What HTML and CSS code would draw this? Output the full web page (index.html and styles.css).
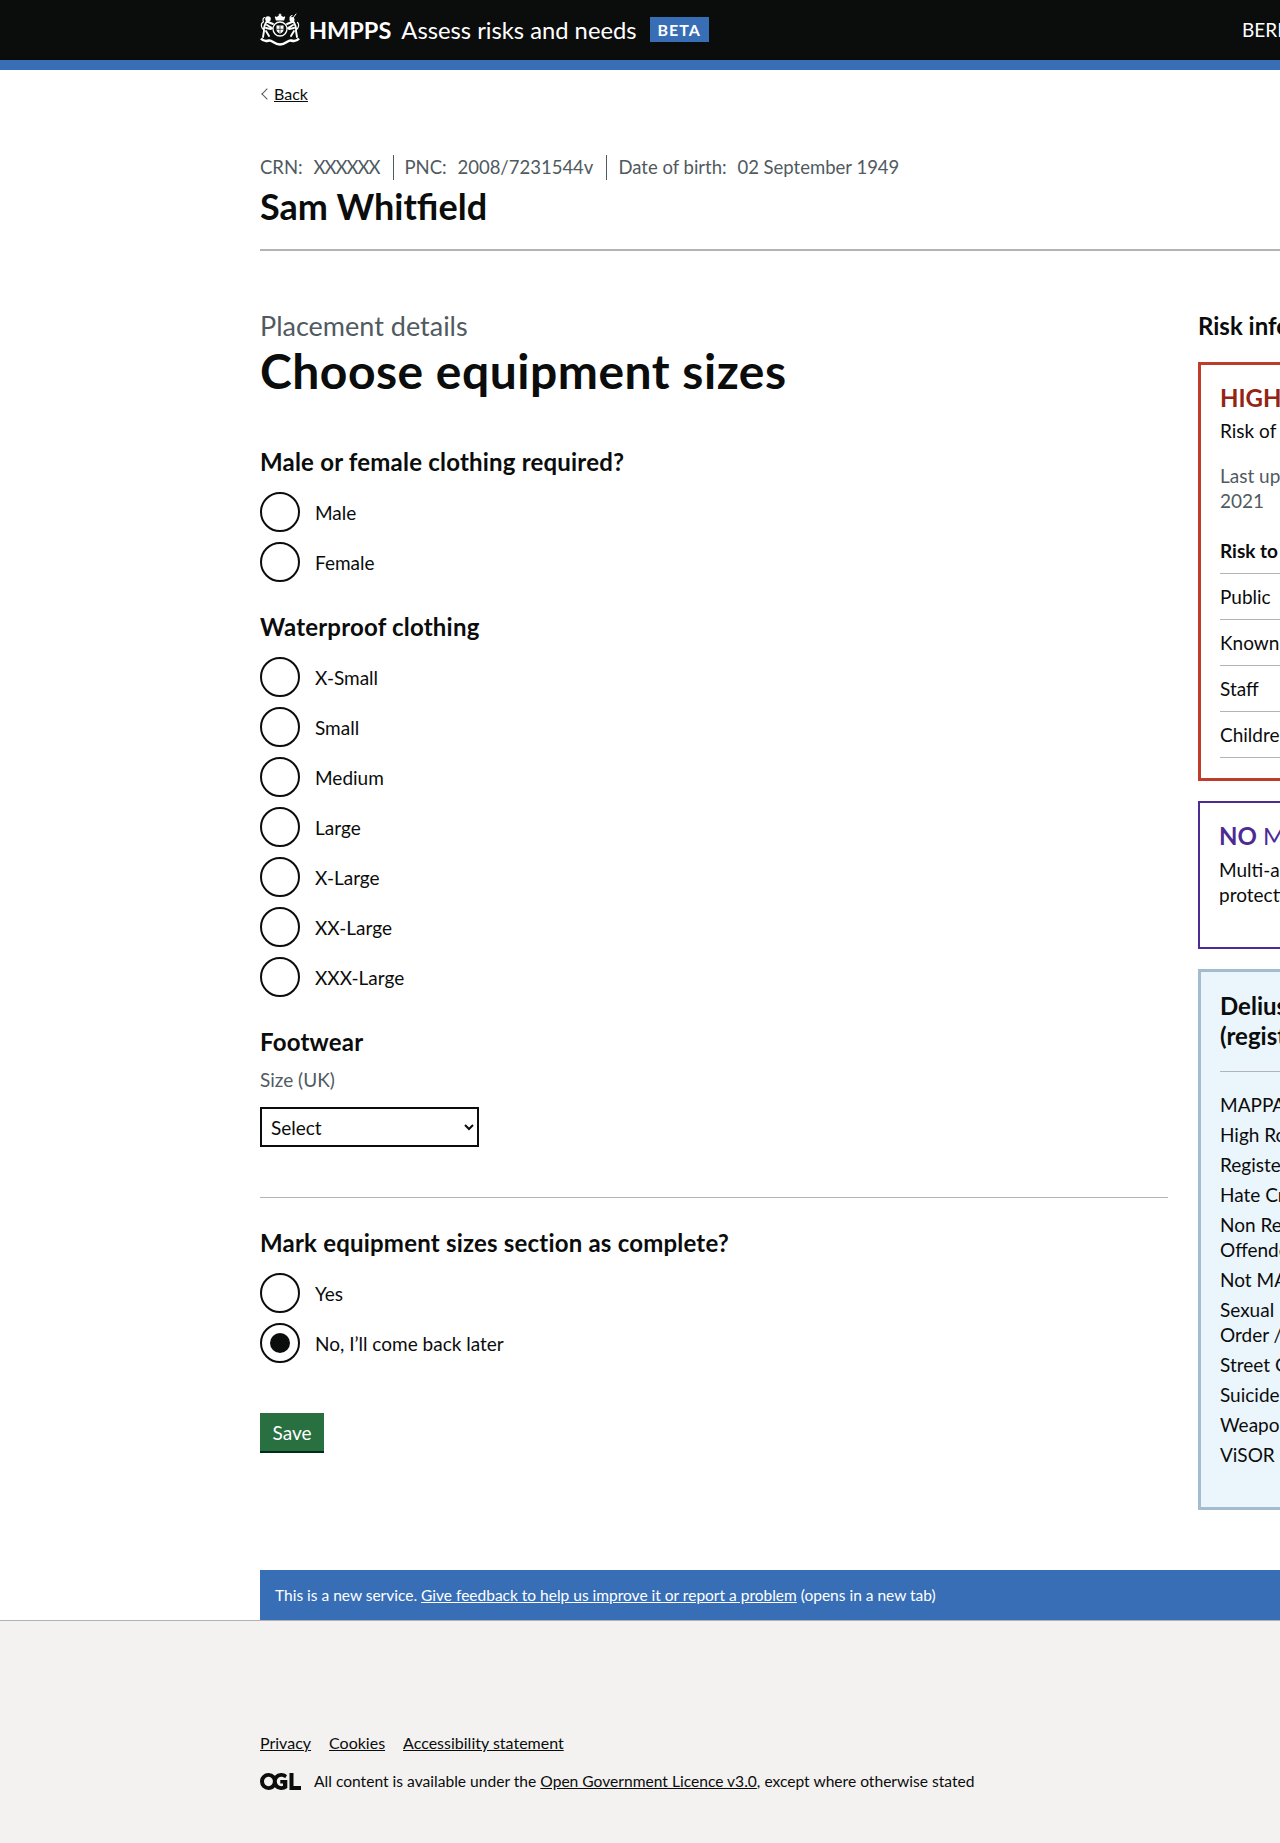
FILE: index.html
```html
<!DOCTYPE html>
<html lang="en">
<head>
    <meta charset="UTF-8">
    <meta name="viewport" content="width=device-width, initial-scale=1.0">
    <title>Choose equipment sizes - Assess risks and needs</title>
    <link rel="stylesheet" href="styles.css">
</head>
<body>
    <header class="site-header">
        <div class="header-inner">
            <a class="brand" href="#">
                <svg class="crest" viewBox="0 0 40 33" aria-hidden="true">
                    <!-- crown -->
                    <path fill="#fff" d="M20 0l.8 1.500 1 .2-.7 1 2.400 1.300.8-.7 1 .8-1.300 3.400h-8l-1.300-3.400 1-.8.8.7 2.400-1.300-.7-1 1-.2z"/>
                    <!-- shield -->
                    <circle cx="20" cy="16" r="7" fill="none" stroke="#fff" stroke-width="1.300"/>
                    <path fill="#fff" d="M16.500 12.500h7v4c0 2-1.500 3.500-3.500 4.200-2-.7-3.500-2.200-3.500-4.200z"/>
                    <path fill="none" stroke="#0b0c0c" stroke-width=".7" d="M20 12.500v8M16.500 16.300h7"/>
                    <!-- lion -->
                    <g fill="none" stroke="#fff" stroke-linecap="round" stroke-width="1.900">
                        <circle cx="8" cy="6" r="2.800" fill="#fff" stroke="none"/>
                        <path d="M7 8c-2 3-3.500 6-3 10l-1 6M6 18l3 5M8 9l5 2M7 12l5 3M6 15l5 1"/>
                        <path stroke-width="1.200" d="M3 16C1 14 .8 11 2.500 9.500M4.500 4.500C3 5 2.500 7 3.500 9"/>
                    </g>
                    <!-- unicorn -->
                    <g fill="none" stroke="#fff" stroke-linecap="round" stroke-width="1.900">
                        <path stroke-width="1" d="M33 5l3-4"/>
                        <circle cx="32" cy="6.500" r="2.500" fill="#fff" stroke="none"/>
                        <path d="M33 8c2 3 3.500 6 3 10l1 6M34 18l-3 5M32 9l-5 2M33 12l-5 3M34 15l-5 1"/>
                        <path stroke-width="1.200" d="M37 16c2-2 2.200-5 .5-6.500M30 5c0-1 .5-2 2-2.500"/>
                    </g>
                    <!-- motto ribbon -->
                    <path fill="none" stroke="#fff" stroke-width="2.400" d="M1 25.500c2 2.500 5 3 8 2 3.500-.5 5 4 11 4s7.500-4.500 11-4c3 1 6 .5 8-2"/>
                </svg>
                <span class="brand-org">HMPPS</span>
                <span class="brand-service">Assess risks and needs</span>
            </a>
            <strong class="phase-tag">BETA</strong>
            <span class="user-name">BERNARD SMITH</span>
        </div>
    </header>

    <div class="page-width">
        <a class="back-link" href="#">Back</a>

        <div class="subject">
            <ul class="subject-meta">
                <li><span class="meta-key">CRN:</span> <span class="crn-value">XXXXXX</span></li>
                <li><span class="meta-key">PNC:</span> 2008/7231544v</li>
                <li><span class="meta-key">Date of birth:</span> 02 September 1949</li>
            </ul>
            <p class="subject-name">Sam Whitfield</p>
        </div>

        <div class="columns">
            <main class="content">
                <span class="caption">Placement details</span>
                <h1>Choose equipment sizes</h1>

                <form>
                    <fieldset>
                        <legend>Male or female clothing required?</legend>
                        <div class="radios">
                            <label class="radio"><input type="radio" name="gender"><span class="radio-mark"></span>Male</label>
                            <label class="radio"><input type="radio" name="gender"><span class="radio-mark"></span>Female</label>
                        </div>
                    </fieldset>

                    <fieldset>
                        <legend>Waterproof clothing</legend>
                        <div class="radios">
                            <label class="radio"><input type="radio" name="waterproof"><span class="radio-mark"></span>X-Small</label>
                            <label class="radio"><input type="radio" name="waterproof"><span class="radio-mark"></span>Small</label>
                            <label class="radio"><input type="radio" name="waterproof"><span class="radio-mark"></span>Medium</label>
                            <label class="radio"><input type="radio" name="waterproof"><span class="radio-mark"></span>Large</label>
                            <label class="radio"><input type="radio" name="waterproof"><span class="radio-mark"></span>X-Large</label>
                            <label class="radio"><input type="radio" name="waterproof"><span class="radio-mark"></span>XX-Large</label>
                            <label class="radio"><input type="radio" name="waterproof"><span class="radio-mark"></span>XXX-Large</label>
                        </div>
                    </fieldset>

                    <div class="footwear">
                        <h2>Footwear</h2>
                        <label class="hint" for="footwear-size">Size (UK)</label>
                        <select id="footwear-size" class="select">
                            <option>Select</option>
                        </select>
                    </div>

                    <hr class="divider">

                    <fieldset>
                        <legend>Mark equipment sizes section as complete?</legend>
                        <div class="radios">
                            <label class="radio"><input type="radio" name="complete"><span class="radio-mark"></span>Yes</label>
                            <label class="radio"><input type="radio" name="complete" checked><span class="radio-mark"></span>No, I’ll come back later</label>
                        </div>
                    </fieldset>

                    <button class="button" type="button">Save</button>
                </form>
            </main>

            <aside class="sidebar">
                <h2 class="sidebar-title">Risk information</h2>

                <div class="card card-rosh">
                    <h3 class="card-heading">HIGH RoSH</h3>
                    <p class="card-text">Risk of serious harm</p>
                    <p class="card-updated">Last updated: 12 February 2021</p>
                    <table class="risk-table">
                        <tr><th>Risk to</th></tr>
                        <tr><td>Public</td></tr>
                        <tr><td>Known adult</td></tr>
                        <tr><td>Staff</td></tr>
                        <tr><td>Children</td></tr>
                    </table>
                </div>

                <div class="card card-mappa">
                    <h3 class="card-heading"><b>NO</b> MAPPA</h3>
                    <p class="card-text">Multi-agency public<br>protection arrangements</p>
                </div>

                <div class="card card-delius">
                    <h3 class="delius-heading">Delius risk flags (registers)</h3>
                    <ul class="flags">
                        <li>MAPPA</li>
                        <li>High RoSH</li>
                        <li>Registered Sex</li>
                        <li>Hate Crime</li>
                        <li>Non Registered Sex<br>Offender</li>
                        <li>Not MAPPA</li>
                        <li>Sexual Harm Prevention<br>Order / SOPO</li>
                        <li>Street Gangs</li>
                        <li>Suicide/Self Harm</li>
                        <li>Weapons</li>
                        <li>ViSOR</li>
                    </ul>
                </div>
            </aside>
        </div>

        <div class="feedback">This is a new service. <a href="#">Give feedback to help us improve it or report a problem</a> (opens in a new tab)</div>
    </div>

    <footer class="site-footer">
        <ul class="footer-links">
            <li><a href="#">Privacy</a></li>
            <li><a href="#">Cookies</a></li>
            <li><a href="#">Accessibility statement</a></li>
        </ul>
        <div class="licence">
            <svg class="ogl" viewBox="0 0 41 17" aria-hidden="true">
                <path fill="#0b0c0c" d="M8.500 0a8.500 8.500 0 1 0 0 17c2.600 0 4.700-1 6.300-2.800a8.500 8.500 0 0 0 6.500 2.800c2.400 0 4.200-.7 6-2V7h-7v3.500h2.700v2.300c-.5.300-1 .4-1.700.4-2.700 0-4.500-2-4.500-4.700s1.800-4.700 4.400-4.700c1.600 0 2.800.5 4 1.500L27 2.300C25.400.8 23.600 0 21.300 0a8.500 8.500 0 0 0-6.500 2.800A8.300 8.300 0 0 0 8.500 0zm0 3.800c2.600 0 4.400 2 4.400 4.700s-1.800 4.700-4.400 4.700-4.500-2-4.500-4.700 1.900-4.700 4.500-4.700z"/>
                <path fill="#0b0c0c" d="M29.500 0h4v13h7.500v4H29.500z"/>
            </svg>
            <span>All content is available under the <a href="#">Open Government Licence v3.0</a>, except where otherwise stated</span>
        </div>
    </footer>
</body>
</html>
```

FILE: styles.css
```css
/* Base */
html, body {
    overflow: hidden;
}

body {
    margin: 0;
    width: 1280px;
    min-height: 1843px;
    font-family: Lato, Arial, sans-serif;
    font-size: 19px;
    color: #0b0c0c;
    background: #f3f2f1;
}

a {
    color: inherit;
}

/* Header */
.site-header {
    height: 60px;
    background: #0b0c0c;
    border-bottom: 10px solid #376eb5;
    color: white;
}

.header-inner {
    display: flex;
    align-items: center;
    height: 59px;
    padding-left: 260px;
    white-space: nowrap;
}

.brand {
    display: flex;
    align-items: center;
    text-decoration: none;
}

.crest {
    width: 40px;
    height: 33px;
    margin-right: 9px;
}

.brand-org {
    font-size: 23.500px;
    font-weight: 700;
    margin-right: 10px;
}

.brand-service {
    font-size: 23.750px;
}

.phase-tag {
    margin-left: 13px;
    padding: 0 8px;
    height: 25px;
    line-height: 25px;
    font-size: 16px;
    letter-spacing: 1px;
    background: #376eb5;
}

.user-name {
    margin-left: auto;
    font-size: 19px;
    width: 38px;
}

/* Page */
.page-width {
    background: white;
    padding-left: 260px;
    width: 1600px;
    border-bottom: 1px solid #b1b4b6;
}

.back-link {
    display: inline-block;
    margin-top: 14px;
    padding-left: 14px;
    position: relative;
    font-size: 16px;
    line-height: 20px;
}

.back-link::before {
    content: "";
    position: absolute;
    left: 3px;
    top: 6px;
    width: 7px;
    height: 7px;
    border-left: 1px solid #505a5f;
    border-bottom: 1px solid #505a5f;
    transform: rotate(45deg);
}

.subject {
    margin-top: 51px;
    width: 1340px;
    padding-bottom: 20px;
    border-bottom: 2px solid #b1b4b6;
}

.subject-meta {
    display: flex;
    list-style: none;
    margin: 0;
    padding: 0;
    font-size: 18.500px;
    line-height: 25px;
    color: #505a5f;
}

.subject-meta li {
    padding-right: 13px;
    margin-right: 11px;
    border-right: 1px solid #505a5f;
}

.subject-meta li:last-child {
    border-right: 0;
}

.meta-key {
    margin-right: 6px;
}

.crn-value {
    letter-spacing: -1px;
}

.subject-name {
    margin: 4px 0 0;
    font-size: 36px;
    line-height: 45px;
    font-weight: 700;
}

.columns {
    display: grid;
    grid-template-columns: 908px 320px;
    column-gap: 30px;
    margin-top: 60px;
}

/* Form */
.caption {
    display: block;
    font-size: 27px;
    line-height: 30px;
    color: #505a5f;
}

h1 {
    margin: 5px 0 51px;
    font-size: 48px;
    line-height: 50px;
    font-weight: 700;
    letter-spacing: .5px;
}

fieldset {
    border: 0;
    margin: 0 0 30px;
    padding: 0;
}

legend, .footwear h2 {
    display: block;
    padding: 0;
    margin: 0 0 15px;
    font-size: 24px;
    line-height: 30px;
    font-weight: 700;
    letter-spacing: .2px;
}

.radios {
    display: flex;
    flex-direction: column;
    gap: 10px;
}

.radio {
    display: flex;
    align-items: center;
    height: 40px;
    line-height: 25px;
    position: relative;
}

.radio input {
    position: absolute;
    opacity: 0;
}

.radio-mark {
    width: 40px;
    height: 40px;
    box-sizing: border-box;
    border: 2px solid #0b0c0c;
    border-radius: 50%;
    margin-right: 15px;
    display: flex;
    align-items: center;
    justify-content: center;
}

.radio input:checked + .radio-mark::after {
    content: "";
    width: 20px;
    height: 20px;
    border-radius: 50%;
    background: #0b0c0c;
}

.footwear h2 {
    margin-bottom: 10px;
}

.hint {
    display: block;
    color: #505a5f;
    line-height: 25px;
    margin-bottom: 15px;
}

.select {
    display: block;
    width: 219px;
    height: 40px;
    padding: 5px;
    font-family: inherit;
    font-size: 19px;
    color: #0b0c0c;
    background: white;
    border: 2px solid #0b0c0c;
    border-radius: 0;
}

.divider {
    margin: 50px 0 30px;
    border: 0;
    border-top: 1px solid #b1b4b6;
}

.button {
    display: block;
    margin-top: 50px;
    padding: 0 12.500px;
    height: 38px;
    font-family: inherit;
    font-size: 19px;
    color: white;
    background: #28703f;
    border: 0;
    box-shadow: 0 2px 0 #002d18;
    cursor: pointer;
}

/* Sidebar */
.sidebar-title {
    margin: 0 0 21px;
    font-size: 24px;
    line-height: 30px;
    font-weight: 700;
}

.card {
    box-sizing: border-box;
    border: 2px solid;
    padding: 20px 20px 20px 19px;
    margin-bottom: 20px;
    line-height: 25px;
}

.card-heading {
    margin: -2px 0 5px;
    font-size: 24px;
    line-height: 30px;
    font-weight: 400;
}

.card-text {
    margin: 0;
}

.card-rosh {
    border-width: 3px;
    border-color: #bf3c2b;
}

.card-rosh .card-heading {
    color: #942514;
    font-weight: 700;
}

.card-updated {
    margin: 20px 0 25px;
    width: 250px;
    color: #505a5f;
}

.risk-table {
    width: 100%;
    border-collapse: collapse;
}

.risk-table th {
    text-align: left;
    padding: 0 0 10px;
    border-bottom: 1px solid #b1b4b6;
}

.risk-table td {
    padding: 10px 0;
    height: 25px;
    border-bottom: 1px solid #b1b4b6;
}

.card-mappa {
    border-color: #4c2c92;
    height: 148px;
}

.card-mappa .card-heading {
    margin-bottom: 6px;
    color: #4c2c92;
}

.card-delius {
    border: 3px solid #a3bccf;
    background: #ebf5fc;
    margin-bottom: 0;
}

.delius-heading {
    margin: -1px 0 0;
    padding-bottom: 20px;
    border-bottom: 1px solid #b1b4b6;
    font-size: 24px;
    line-height: 30px;
    font-weight: 700;
}

.flags {
    list-style: none;
    margin: 20px 0 20px;
    padding: 0;
}

.flags li {
    margin-bottom: 5px;
}

/* Feedback + footer */
.feedback {
    margin-top: 60px;
    padding: 0 15px;
    height: 50px;
    width: 1310px;
    line-height: 50px;
    font-size: 15.500px;
    color: white;
    background: #376eb5;
}

.site-footer {
    padding: 109px 0 0 260px;
    font-size: 16px;
}

.footer-links {
    display: flex;
    gap: 18px;
    list-style: none;
    margin: 0 0 14px;
    padding: 0;
    line-height: 25px;
}

.licence {
    display: flex;
    align-items: center;
    gap: 13px;
    line-height: 25px;
    font-size: 15.600px;
}

.ogl {
    width: 41px;
    height: 17px;
}
```
